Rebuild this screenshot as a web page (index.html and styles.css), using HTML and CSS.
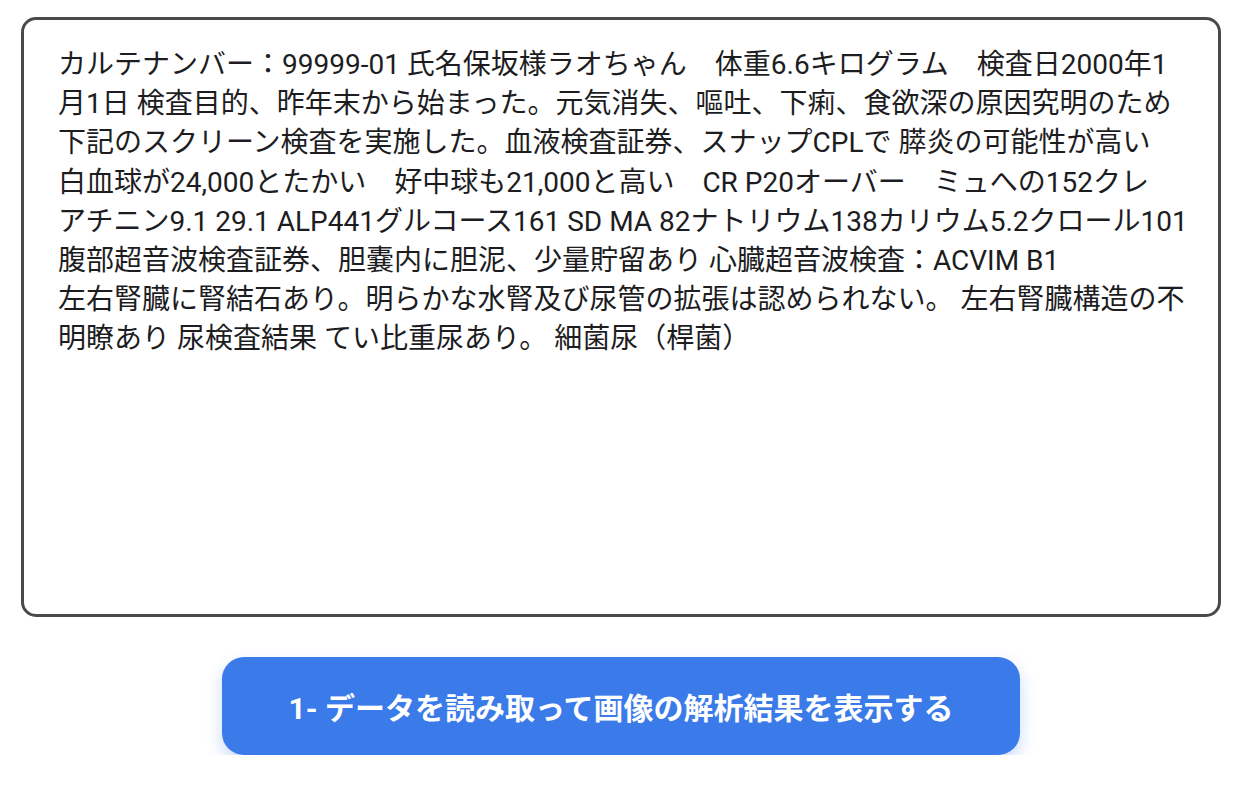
FILE: index.html
```html
<!DOCTYPE html>
<html lang="ja">
<head>
<meta charset="utf-8">
<title>カルテ</title>
<link rel="stylesheet" href="styles.css">
</head>
<body>
<main class="page">
  <div class="note">
    <span class="line">カルテナンバー：99999-01 氏名保坂様ラオちゃん　体重6.6キログラム　検査日2000年1</span>
    <span class="line">月1日 検査目的、昨年末から始まった。元気消失、嘔吐、下痢、食欲深の原因究明のため</span>
    <span class="line">下記のスクリーン検査を実施した。血液検査証券、スナップCPLで 膵炎の可能性が高い</span>
    <span class="line">白血球が24,000とたかい　好中球も21,000と高い　CR P20オーバー　ミュへの152クレ</span>
    <span class="line">アチニン9.1 29.1 ALP441グルコース161 SD MA 82ナトリウム138カリウム5.2クロール101</span>
    <span class="line">腹部超音波検査証券、胆嚢内に胆泥、少量貯留あり 心臓超音波検査：ACVIM B1</span>
    <span class="line">左右腎臓に腎結石あり。明らかな水腎及び尿管の拡張は認められない。 左右腎臓構造の不</span>
    <span class="line">明瞭あり 尿検査結果 てい比重尿あり。 細菌尿（桿菌）</span>
  </div>
  <button class="action" type="button">1- データを読み取って画像の解析結果を表示する</button>
</main>
</body>
</html>
```

FILE: styles.css
```css
html, body {
  margin: 0;
  padding: 0;
  background: #ffffff;
}

body {
  font-family: Roboto, "Noto Sans CJK JP", sans-serif;
}

.page {
  width: 1200px;
  margin-left: 21px;
  padding-top: 17px;
  display: flex;
  flex-direction: column;
  align-items: center;
  gap: 40px;
}

.note {
  box-sizing: border-box;
  width: 1200px;
  height: 600px;
  border: 3px solid #4a4a4a;
  border-radius: 15px;
  padding: 25px 30px 0 34px;
  color: #1d1d1f;
  font-size: 28px;
  line-height: 39.2px;
}

.line {
  display: block;
  white-space: pre;
}

.action {
  width: 798px;
  height: 98px;
  border: none;
  border-radius: 22px;
  background: #3b7be9;
  color: #ffffff;
  font-family: Roboto, "Noto Sans CJK JP", sans-serif;
  font-size: 30px;
  font-weight: 700;
  box-shadow: 0 7px 16px rgba(59, 123, 233, 0.28);
  cursor: pointer;
  padding: 0;
}
```
